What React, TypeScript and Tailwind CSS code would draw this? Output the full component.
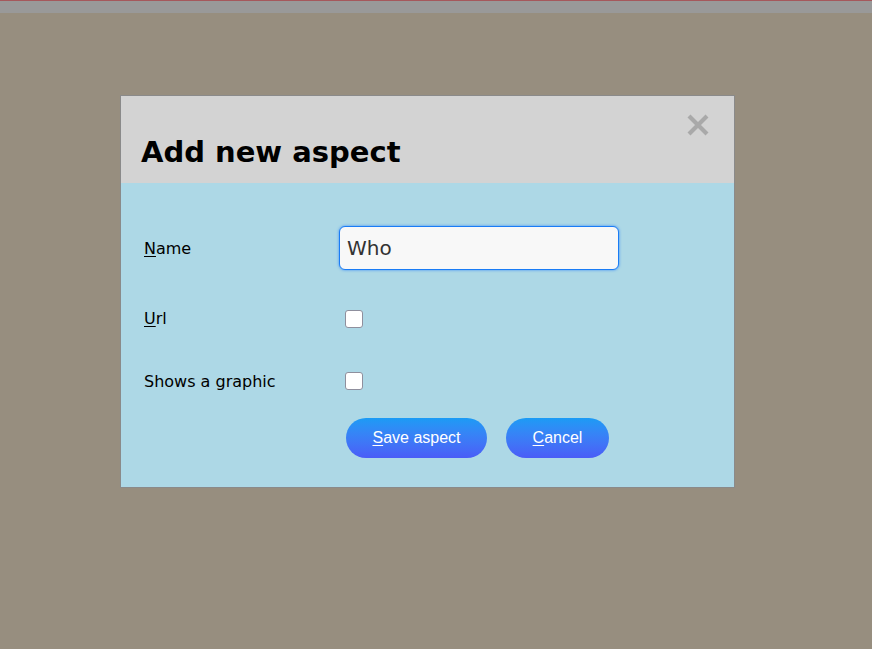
export default function App() {
  return (
    <div className="min-h-[649px] w-full bg-[#978e7f] font-['DejaVu_Sans',Verdana,sans-serif]">
      <div className="h-[1px] bg-[#a5585c]" />
      <div className="h-[12px] bg-[#999999]" />

      <div className="pt-[82px] pl-[120px]">
        <div className="w-[615px] border border-[#8a8a8a] bg-[#add8e6]">
          {/* header */}
          <div className="relative h-[87px] bg-[#d3d3d3] pl-[20px] pt-[36px]">
            <h2 className="text-[29px] font-bold leading-[40px] text-black">Add new aspect</h2>
            <button className="absolute right-[23px] top-[16px] flex h-[26px] w-[26px] items-center justify-center">
              <svg width="24" height="24" viewBox="0 0 24 24">
                <path d="M3 3 L21 21 M21 3 L3 21" stroke="#a9a9a9" strokeWidth="4.2" />
              </svg>
            </button>
          </div>

          {/* body */}
          <div className="px-[23px] pt-[43px] pb-[29px] text-[16px] text-black">
            <div className="grid grid-cols-[195px_1fr] items-center">
              <label className="h-[44px] leading-[46px]">
                <span className="underline underline-offset-2">N</span>ame
              </label>
              <input
                defaultValue="Who"
                className="h-[44px] w-[280px] rounded-[6px] border border-[#1a7cf5] bg-[#f8f8f8] px-[7px] text-[20px] text-[#333] shadow-[0_0_3px_#3b8cf5] outline-none"
              />

              <label className="mt-[27px] h-[44px] leading-[44px]">
                <span className="underline underline-offset-2">U</span>rl
              </label>
              <div className="mt-[27px] flex h-[44px] items-center pl-[6px]">
                <input type="checkbox" className="h-[18px] w-[18px] appearance-none rounded-[3px] border border-[#8f8f9d] bg-white" />
              </div>

              <label className="mt-[18px] h-[44px] leading-[46px]">Shows a graphic</label>
              <div className="mt-[18px] flex h-[44px] items-center pl-[6px]">
                <input type="checkbox" className="h-[18px] w-[18px] appearance-none rounded-[3px] border border-[#8f8f9d] bg-white" />
              </div>
            </div>

            <div className="mt-[15px] flex gap-[19px] pl-[202px] font-['Liberation_Sans',Arial,sans-serif]">
              <button className="h-[40px] w-[141px] rounded-full bg-gradient-to-b from-[#1a9bf5] to-[#4a5cf7] text-[16px] text-white">
                <span className="underline underline-offset-2">S</span>ave aspect
              </button>
              <button className="h-[40px] w-[103px] rounded-full bg-gradient-to-b from-[#1a9bf5] to-[#4a5cf7] text-[16px] text-white">
                <span className="underline underline-offset-2">C</span>ancel
              </button>
            </div>
          </div>
        </div>
      </div>
    </div>
  );
}
